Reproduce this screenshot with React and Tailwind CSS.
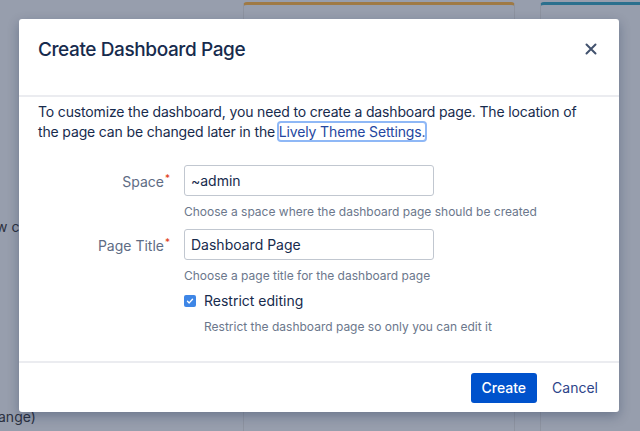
import React from 'react';

const Field = ({ label, value, help }) => (
  <div className="flex items-start">
    <div className="w-[146px] shrink-0 pr-[14px] pt-[6px] text-right text-[14px] text-[#5e6c84]">
      {label}
      <span className="relative -top-[5px] ml-[1px] text-[10px] text-[#de350b]">*</span>
    </div>
    <div>
      <div className="flex h-[31px] w-[250px] items-center rounded-[3px] border border-[#c1c7d0] bg-white px-[6px] text-[14px] text-[#172b4d]">
        {value}
      </div>
      <p className="mt-[7px] text-[12px] text-[#6b778c]">{help}</p>
    </div>
  </div>
);

export default function App() {
  return (
    <div className="relative h-[431px] w-[640px] overflow-hidden bg-[#979ead] font-['Inter',sans-serif]">
      {/* dimmed page behind */}
      <div className="absolute left-[243px] top-[2px] h-[440px] w-[272px] rounded-t-[4px] border border-[#8d93a0] border-t-[3px] border-t-[#9f7a45]" />
      <div className="absolute left-[540px] top-[2px] h-[440px] w-[120px] rounded-t-[4px] border border-[#8d93a0] border-t-[3px] border-t-[#2b708e]" />
      <div className="absolute left-[-4px] top-[216px] text-[14px] text-[#2c3140]">w c</div>
      <div className="absolute left-[-2px] top-[406px] text-[14px] text-[#2c3140]">ange)</div>

      {/* dialog */}
      <div className="absolute left-[19px] top-[19px] flex h-[393px] w-[600px] flex-col rounded-[3px] bg-white shadow-[0_4px_12px_rgba(9,30,66,0.3)]">
        <div className="flex h-[78px] items-start justify-between border-b-2 border-[#ebecf0] pl-[19px] pr-[22px] pt-[17px]">
          <h1 className="text-[19px] font-medium tracking-[-0.4px] text-[#172b4d]">Create Dashboard Page</h1>
          <svg width="12" height="12" viewBox="0 0 12 12" className="mt-[7px] text-[#42526e]">
            <path d="M1.5 1.5l9 9M10.5 1.5l-9 9" stroke="currentColor" strokeWidth="2" strokeLinecap="round" />
          </svg>
        </div>

        <div className="flex-1 px-[19px] pt-[5px]">
          <p className="text-[14px] leading-[20px] tracking-[-0.15px] text-[#172b4d]">
            To customize the dashboard, you need to create a dashboard page. The location of the page can be changed later in the{' '}
            <span className="rounded-[2px] text-[#2446a0] shadow-[0_0_0_2px_#8fb8f6]">Lively Theme Settings.</span>
          </p>

          <div className="mt-[23px] flex flex-col gap-[8px]">
            <Field label="Space" value="~admin" help="Choose a space where the dashboard page should be created" />
            <Field label="Page Title" value="Dashboard Page" help="Choose a page title for the dashboard page" />
          </div>

          <div className="ml-[146px] mt-[5px]">
            <div className="flex items-center gap-[8px]">
              <div className="flex h-[12px] w-[12px] items-center justify-center rounded-[2px] bg-[#3e86e6]">
                <svg width="8" height="8" viewBox="0 0 8 8">
                  <path d="M1.5 4.2l1.7 1.7L6.5 2.3" fill="none" stroke="white" strokeWidth="1.4" strokeLinecap="round" strokeLinejoin="round" />
                </svg>
              </div>
              <span className="text-[14px] text-[#172b4d]">Restrict editing</span>
            </div>
            <p className="ml-[20px] mt-[7px] text-[12px] text-[#6b778c]">Restrict the dashboard page so only you can edit it</p>
          </div>
        </div>

        <div className="flex h-[51px] items-center justify-end gap-[15px] border-t-2 border-[#ebecf0] pr-[21px]">
          <button className="h-[30px] rounded-[3px] bg-[#0052cc] px-[11px] text-[14px] font-medium text-white">Create</button>
          <button className="text-[14px] text-[#2d4489]">Cancel</button>
        </div>
      </div>
    </div>
  );
}
